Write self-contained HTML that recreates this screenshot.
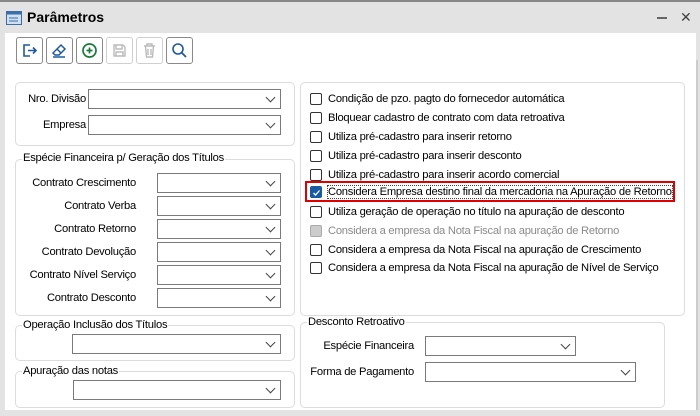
<!DOCTYPE html>
<html><head><meta charset="utf-8"><style>
*{box-sizing:border-box;margin:0;padding:0}
body{width:700px;height:416px;background:#e3e3e3;font-family:"Liberation Sans",sans-serif;font-size:11.2px;letter-spacing:-0.25px;color:#000;position:relative;overflow:hidden}
.a{position:absolute}
.grp{position:absolute;border:1px solid #dcdcdc;border-radius:5px}
.gl{position:absolute;background:#fff;padding:0 1px;white-space:nowrap}
.lb{position:absolute;text-align:right;white-space:nowrap}
.cb{position:absolute;height:20px;border:1px solid #7a7a7a;background:#fff}
.cb:after{content:"";position:absolute;right:6px;top:4px;width:6px;height:6px;border-right:1.3px solid #444;border-bottom:1.3px solid #444;transform:rotate(45deg)}
.btn{position:absolute;top:37px;width:27px;height:27px;border:1px solid #8a8a8a;border-radius:3px;background:#fff}
.btn.d{border-color:#cfcfcf}
.ck{position:absolute;left:310px;width:12px;height:12px;border:1px solid #333;border-radius:2px;background:#fff}
.ct{position:absolute;left:328px;white-space:nowrap}
</style></head><body>
<div class="a" style="left:0;top:0;width:700px;height:2px;background:#888"></div>
<svg class="a" style="left:6px;top:11px" width="16" height="14" viewBox="0 0 16 14"><rect x="0.5" y="0.5" width="15" height="13" fill="#cfe0f2" stroke="#3c6ea8"/><rect x="0.5" y="0.5" width="15" height="3" fill="#3c6ea8"/><line x1="3" y1="7" x2="12" y2="7" stroke="#3c6ea8"/><line x1="3" y1="10" x2="12" y2="10" stroke="#3c6ea8"/></svg>
<div class="a" style="left:27px;top:9px;font-weight:bold;font-size:14px;letter-spacing:0">Parâmetros</div>
<div class="a" style="left:657px;top:17px;width:10px;height:2px;background:#666"></div>
<div class="a" style="left:680px;top:9px;font-size:14px;color:#444">✕</div>
<div class="a" style="left:5px;top:33px;width:691px;height:377px;background:#fff"></div>
<div class="a" style="left:696px;top:60px;width:2px;height:350px;background:#ccc"></div>

<div class="btn" style="left:16px"><svg width="25" height="25" viewBox="0 0 25 25"><path d="M13 7H7v11h6M11 12.5h8M16 9.5l3 3-3 3" fill="none" stroke="#1e5aa0" stroke-width="1.6"/></svg></div>
<div class="btn" style="left:46px"><svg width="25" height="25" viewBox="0 0 25 25"><path d="M6 15l8-8 4 4-6 6H8zM10 11l4 4M6 19h12" fill="none" stroke="#1e5aa0" stroke-width="1.5"/></svg></div>
<div class="btn" style="left:76px"><svg width="25" height="25" viewBox="0 0 25 25"><circle cx="12.5" cy="12.5" r="6.5" fill="none" stroke="#1a7a3a" stroke-width="1.7"/><path d="M12.5 9.5v6M9.5 12.5h6" stroke="#1a7a3a" stroke-width="1.7"/></svg></div>
<div class="btn d" style="left:106px"><svg width="25" height="25" viewBox="0 0 25 25"><path d="M7 7h9l2 2v9H7z M9 7v4h6V7 M9 18v-4h7v4" fill="none" stroke="#bbb" stroke-width="1.4"/></svg></div>
<div class="btn d" style="left:136px"><svg width="25" height="25" viewBox="0 0 25 25"><path d="M7 8h11M10 8V6h5v2M8.5 8l1 11h6l1-11M11 11v6M14 11v6" fill="none" stroke="#bbb" stroke-width="1.4"/></svg></div>
<div class="btn" style="left:166px"><svg width="25" height="25" viewBox="0 0 25 25"><circle cx="11" cy="11" r="5" fill="none" stroke="#1e5aa0" stroke-width="1.6"/><path d="M14.5 14.5l4.5 4.5" stroke="#1e5aa0" stroke-width="1.8"/></svg></div>

<div class="grp" style="left:15px;top:82px;width:280px;height:64px"></div>
<div class="lb" style="right:614px;top:93px">Nro. Divisão</div>
<div class="cb" style="left:88px;top:89px;width:193px"></div>
<div class="lb" style="right:614px;top:119px">Empresa</div>
<div class="cb" style="left:88px;top:115px;width:193px"></div>

<div class="grp" style="left:15px;top:159px;width:280px;height:157px"></div>
<div class="gl" style="left:22px;top:152px">Espécie Financeira p/ Geração dos Títulos</div>
<div class="lb" style="right:564px;top:177px">Contrato Crescimento</div><div class="cb" style="left:157px;top:173px;width:124px"></div>
<div class="lb" style="right:564px;top:200px">Contrato Verba</div><div class="cb" style="left:157px;top:196px;width:124px"></div>
<div class="lb" style="right:564px;top:223px">Contrato Retorno</div><div class="cb" style="left:157px;top:219px;width:124px"></div>
<div class="lb" style="right:564px;top:246px">Contrato Devolução</div><div class="cb" style="left:157px;top:242px;width:124px"></div>
<div class="lb" style="right:564px;top:269px">Contrato Nível Serviço</div><div class="cb" style="left:157px;top:265px;width:124px"></div>
<div class="lb" style="right:564px;top:292px">Contrato Desconto</div><div class="cb" style="left:157px;top:288px;width:124px"></div>

<div class="grp" style="left:15px;top:325px;width:280px;height:36px"></div>
<div class="gl" style="left:22px;top:319px">Operação Inclusão dos Títulos</div>
<div class="cb" style="left:72px;top:334px;width:209px"></div>
<div class="grp" style="left:15px;top:371px;width:280px;height:37px"></div>
<div class="gl" style="left:22px;top:365px">Apuração das notas</div>
<div class="cb" style="left:73px;top:380px;width:208px"></div>

<div class="grp" style="left:300px;top:82px;width:385px;height:234px"></div>
<div class="ck" style="top:93px"></div><div class="ct" style="top:93px">Condição de pzo. pagto do fornecedor automática</div>
<div class="ck" style="top:112px"></div><div class="ct" style="top:112px">Bloquear cadastro de contrato com data retroativa</div>
<div class="ck" style="top:131px"></div><div class="ct" style="top:131px">Utiliza pré-cadastro para inserir retorno</div>
<div class="ck" style="top:150px"></div><div class="ct" style="top:150px">Utiliza pré-cadastro para inserir desconto</div>
<div class="ck" style="top:169px"></div><div class="ct" style="top:169px">Utiliza pré-cadastro para inserir acordo comercial</div>
<div class="a" style="left:305px;top:181px;width:370px;height:21px;border:2px solid #e00000"></div>
<div class="ck" style="top:186px;background:#1a5aa0;border-color:#1a5aa0"><svg class="a" style="left:1px;top:1px" width="9" height="9"><path d="M1.5 5l2 2 4-4.5" fill="none" stroke="#fff" stroke-width="1.3"/></svg></div>
<div class="ct" style="top:186px;outline:1px dotted #444">Considera Empresa destino final da mercadoria na Apuração de Retorno</div>
<div class="ck" style="top:206px"></div><div class="ct" style="top:206px">Utiliza geração de operação no título na apuração de desconto</div>
<div class="ck" style="top:225px;background:#ccc;border-color:#aaa"></div><div class="ct" style="top:225px;color:#8a8a8a">Considera a empresa da Nota Fiscal na apuração de Retorno</div>
<div class="ck" style="top:244px"></div><div class="ct" style="top:244px">Considera a empresa da Nota Fiscal na apuração de Crescimento</div>
<div class="ck" style="top:262px"></div><div class="ct" style="top:262px">Considera a empresa da Nota Fiscal na apuração de Nível de Serviço</div>

<div class="grp" style="left:300px;top:322px;width:365px;height:86px"></div>
<div class="gl" style="left:307px;top:316px">Desconto Retroativo</div>
<div class="lb" style="right:286px;top:340px">Espécie Financeira</div><div class="cb" style="left:425px;top:336px;width:151px"></div>
<div class="lb" style="right:286px;top:366px">Forma de Pagamento</div><div class="cb" style="left:425px;top:362px;width:211px"></div>
</body></html>
